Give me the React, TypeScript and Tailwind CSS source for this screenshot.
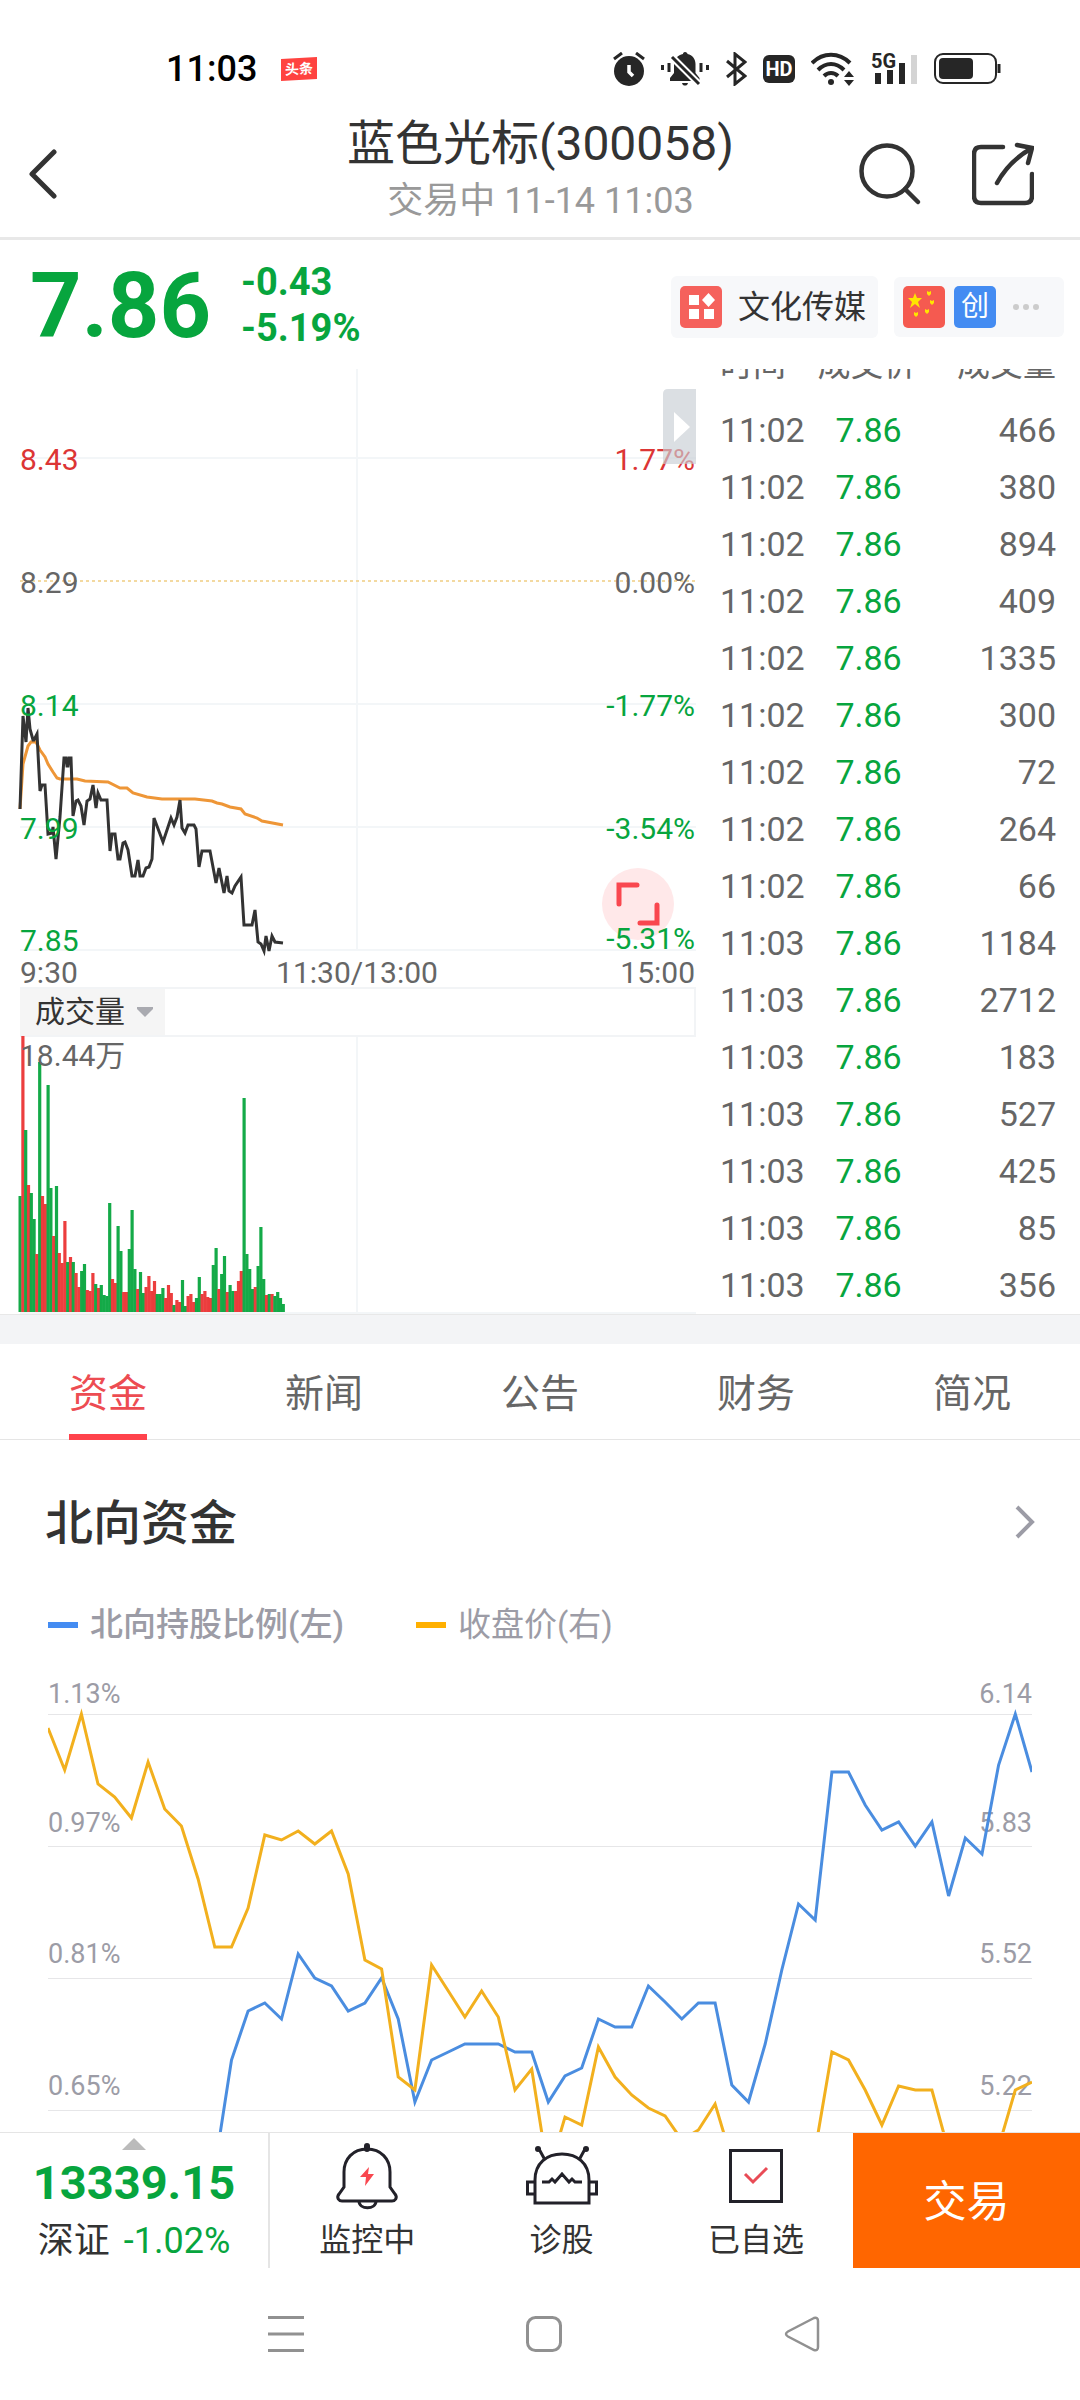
import type { ReactNode } from 'react'

type Trade = [time: string, price: string, volume: number]

const trades: Trade[] = [
  ['11:02', '7.86', 466],
  ['11:02', '7.86', 380],
  ['11:02', '7.86', 894],
  ['11:02', '7.86', 409],
  ['11:02', '7.86', 1335],
  ['11:02', '7.86', 300],
  ['11:02', '7.86', 72],
  ['11:02', '7.86', 264],
  ['11:02', '7.86', 66],
  ['11:03', '7.86', 1184],
  ['11:03', '7.86', 2712],
  ['11:03', '7.86', 183],
  ['11:03', '7.86', 527],
  ['11:03', '7.86', 425],
  ['11:03', '7.86', 85],
  ['11:03', '7.86', 356],
]

const tabs = ['资金', '新闻', '公告', '财务', '简况']

const priceLine =
  '0,440 3,347 6,373 8,339 10,360 13,371 14,371 17,365 20,422 22,416 25,416 28,465 32,464 33,458 36,490 40,448 44,389 46,389 47,397 48,397 49,389 51,389 53,447 56,432 58,431 61,437 64,456 67,432 70,430 73,416 76,439 78,424 81,431 87,431 90,482 92,465 95,465 98,490 100,490 103,474 105,473 108,481 112,507 115,507 118,491 120,507 123,507 126,499 129,498 132,490 134,449 143,473 151,449 154,456 157,448 160,431 162,459 165,464 168,456 174,456 176,460 179,498 182,482 190,482 196,514 199,499 204,524 207,507 209,522 212,524 215,517 221,508 224,556 232,556 235,541 238,573 241,575 244,582 246,567 249,582 252,567 255,573 263,574'

const averageLine =
  '0,440 3,395 8,377 11,373 16,373 20,381 25,388 28,395 33,403 37,409 40,410 57,410 65,412 88,413 100,419 107,419 113,424 127,428 142,430 175,430 192,432 197,434 202,435 210,438 221,440 225,445 237,449 242,452 263,456'

// one bar per minute, negative when the price fell
const volumes = [
  -116, 276, -182, 127, -119, -93, 58, -250, 116, 108, -227, -124, 76, -126, 59, 49, 91, -50, 55,
  -50, 39, 25, -41, -48, 22, 21, 39, -28, 24, -27, -17, -16, -109, 33, 29, -86, -61, 20, 20, -63,
  -102, -43, 23, -40, -19, 25, 36, 21, 31, -18, -18, -24, 14, 27, 19, -7, 12, 10, -32, -6, 16, 18,
  10, -14, -35, 18, 21, 15, 14, -47, -64, 23, -38, -56, 20, -27, -21, 21, 31, 41, -214, -58, -43,
  -23, 25, -46, -85, -33, 17, -18, 18, -16, -20, -14, -8,
]

const closePrices = [
  14, 56, 0, 70, 83, 104, 48, 95, 112, 165, 233, 233, 194, 121, 126, 117, 130, 117, 160, 246, 255,
  363, 376, 251, 277, 303, 277, 303, 376, 355, 460, 403, 411, 333, 363, 381, 394, 402, 426, 416,
  390, 446, 470, 470, 470, 470, 436, 338, 346, 376, 411, 372, 376, 376, 437, 470, 470, 433, 376,
  368,
]

const holdings = [
  454, 346, 297, 289, 305, 240, 264, 272, 297, 289, 264, 305, 388, 346, 338, 330, 330, 330, 338,
  338, 388, 362, 354, 305, 313, 313, 272, 288, 305, 289, 289, 371, 388, 330, 256, 190, 206, 58, 58,
  91, 116, 108, 132, 108, 182, 124, 140, 51, 0, 58,
]

const toPoints = (values: number[], start = 0) =>
  values.map((v, i) => `${(((i + start) * 984) / 59).toFixed(1)},${v + 34}`).join(' ')

function StatusBar() {
  return (
    <div className="flex h-[90px] items-end justify-between pr-[78px] pb-1 pl-[166px] text-[#262626]">
      <div className="flex items-center gap-6">
        <span className="text-4xl leading-[34px] font-medium text-black">11:03</span>
        <span className="-skew-y-3 bg-[#ff4340] px-1 text-sm leading-[22px] font-bold text-white">
          头条
        </span>
      </div>
      <div className="flex items-center gap-4">
        <svg width="32" height="34" viewBox="0 0 32 34" aria-label="闹钟">
          <circle cx="16" cy="19" r="15" fill="currentColor" />
          <path d="M1 7 9 1M31 7 23 1" stroke="currentColor" strokeWidth="3" />
          <path d="M16 13v7l4 4" fill="none" stroke="#fff" strokeWidth="3.500" />
        </svg>
        <svg width="48" height="34" viewBox="0 0 48 34" aria-label="静音">
          <path
            d="M24 0c1.500 0 2.500 1 2.500 2 5 1 8 5 8 10v9l4 5v3H9v-3l4-5v-9c0-5 4-9 9-10 0-1 .5-2 2-2zM21 31h6c-.5 2-1.500 2.500-3 2.500S21.500 33 21 31z"
            fill="currentColor"
          />
          <path d="M8 2 39 33" stroke="#fff" strokeWidth="7" />
          <path
            d="M11 5 38 32M1.500 13v5M8 11v9M46.500 13v5M40 11v9"
            stroke="currentColor"
            strokeWidth="3"
          />
        </svg>
        <svg width="22" height="34" viewBox="0 0 22 34" aria-label="蓝牙">
          <path
            d="M2 9 20 24 10 32V2l10 8L2 25"
            fill="none"
            stroke="currentColor"
            strokeWidth="3"
          />
        </svg>
        <span className="w-8 rounded-md bg-[#262626] text-center text-xl leading-7 font-bold text-white">
          HD
        </span>
        <svg width="44" height="34" viewBox="0 0 44 34" aria-label="无线网络">
          <g fill="none" stroke="currentColor" strokeWidth="4">
            <path d="M1 11c11-11 27-11 38 0" />
            <path d="M7 18c8-8 18-8 26 0" />
            <path d="M13 24c4-4 10-4 14 0" />
          </g>
          <circle cx="20" cy="30" r="3" fill="currentColor" />
          <path d="M33 25l5-6 5 6zM33 28l5 6 5-6z" fill="currentColor" />
        </svg>
        <svg width="47" height="34" viewBox="0 0 47 34" className="overflow-visible" aria-label="5G">
          <text x="0" y="16" fontSize="20" fontWeight="700" fill="currentColor">
            5G
          </text>
          <path d="M4 21h6v11H4zM16 18h6v14h-6zM28 11h6v21h-6z" fill="currentColor" />
          <path d="M40 3h6v29h-6z" fill="#d4d4d4" />
        </svg>
        <svg width="68" height="34" viewBox="0 0 68 34" aria-label="电量">
          <rect x="1" y="2" width="61" height="29" rx="8" fill="none" stroke="currentColor" strokeWidth="2" />
          <rect x="5" y="6" width="34" height="21" rx="4" fill="currentColor" />
          <path d="M65 12v9" stroke="currentColor" strokeWidth="3" />
        </svg>
      </div>
    </div>
  )
}

function Header() {
  return (
    <header className="flex h-[150px] items-start justify-between border-b-[3px] border-[#e8e8e8] pr-[46px] pl-[29px] text-[#333]">
      <button type="button" aria-label="返回" className="flex w-[174px] pt-[59px]">
        <svg width="30" height="50" viewBox="0 0 30 50">
          <path
            d="M25 3 3 25l22 22"
            fill="none"
            stroke="currentColor"
            strokeWidth="5"
            strokeLinecap="round"
            strokeLinejoin="round"
          />
        </svg>
      </button>
      <div className="pt-6 pl-5 text-center">
        <h1 className="text-5xl leading-[60px]">蓝色光标(300058)</h1>
        <p className="text-4xl leading-[54px] text-[#999]">交易中 11-14 11:03</p>
      </div>
      <div className="flex w-[176px] gap-[50px] pt-[52px]">
        <button type="button" aria-label="搜索">
          <svg width="64" height="64" viewBox="0 0 64 64">
            <g fill="none" stroke="currentColor" strokeWidth="4.500" strokeLinecap="round">
              <circle cx="29" cy="29" r="25.500" />
              <path d="M47 47 60 60" />
            </g>
          </svg>
        </button>
        <button type="button" aria-label="分享">
          <svg width="62" height="64" viewBox="0 0 62 64">
            <path
              d="M31 5H9Q2 5 2 12v42q0 7 7 7h44q7 0 7-7V32M45 3l15 3-4 15M60 6Q37 19 25 41"
              fill="none"
              stroke="currentColor"
              strokeWidth="4.500"
              strokeLinecap="round"
            />
          </svg>
        </button>
      </div>
    </header>
  )
}

function Quote() {
  return (
    <section className="flex h-[129px] items-center justify-between pr-4 pl-[30px] text-[#07a53e]">
      <div className="flex items-center gap-[30px] font-bold">
        <span className="pt-1 text-[90px] leading-[100px]">7.86</span>
        <div className="text-[38px] leading-[46px]">
          <p>-0.43</p>
          <p>-5.19%</p>
        </div>
      </div>
      <div className="flex items-center gap-4 pt-1">
        <a
          href="#sector"
          className="flex h-[62px] items-center gap-4 rounded-md bg-[#f7f8fa] pr-3 pl-[9px] text-[32px] text-[#333]"
        >
          <svg width="42" height="42" viewBox="0 0 42 42">
            <rect width="42" height="42" rx="5" fill="#f5615c" />
            <path d="M9 9h10v10H9zM9 23h10v10H9zM24 23h10v10H24zM28.500 7l6.500 7-6.500 7-6.500-7z" fill="#fff" />
          </svg>
          文化传媒
        </a>
        <button
          type="button"
          aria-label="更多标签"
          className="flex h-[60px] items-center gap-[9px] rounded-md bg-[#f7f8fa] px-[9px]"
        >
          <svg width="42" height="42" viewBox="0 0 42 42">
            <rect width="42" height="42" rx="5" fill="#f55a50" />
            <path
              d="M12 7l2 5h5l-4 4 2 6-5-4-5 4 2-6-4-4h5zM24 5l2 1 2-1v3l-2 2-2-2zM27 14l2 1 2-1v3l-2 2-2-2zM22 23l2 1 2-1v3l-2 2-2-2zM11 26l2 1 2-1v3l-2 2-2-2z"
              fill="#ffe500"
            />
          </svg>
          <span className="size-[42px] rounded-[5px] bg-[#448cf2] text-[28px] leading-[42px] text-white">
            创
          </span>
          <svg width="50" height="8" viewBox="0 0 50 8" fill="#ccc">
            <circle cx="11" cy="4" r="3" />
            <circle cx="21" cy="4" r="3" />
            <circle cx="31" cy="4" r="3" />
          </svg>
        </button>
      </div>
    </section>
  )
}

function MinuteChart() {
  return (
    <svg viewBox="0 0 676 618" className="block w-full overflow-visible text-[30px]">
      <path d="M0 89H676M0 335H676M0 458H676M0 581H676M337 0V581" stroke="#f3f6f8" strokeWidth="2" />
      <path d="M0 212H676" stroke="#f3d9a0" strokeWidth="2" strokeDasharray="3 3" />
      <circle cx="618" cy="535" r="36" fill="#ffe8e9" />
      <path
        d="M599 535V516h18M637 536v18h-17"
        fill="none"
        stroke="#f9474f"
        strokeWidth="5"
        strokeLinecap="round"
      />
      <polyline points={averageLine} fill="none" stroke="#ee9637" strokeWidth="3" />
      <polyline points={priceLine} fill="none" stroke="#333" strokeWidth="3" />
      <g fill="#07a53e">
        <text x="0" y="101" fill="#dc3535">8.43</text>
        <text x="0" y="224" fill="#666">8.29</text>
        <text x="0" y="347">8.14</text>
        <text x="0" y="470">7.99</text>
        <text x="0" y="582">7.85</text>
      </g>
      <g fill="#07a53e" textAnchor="end">
        <text x="675" y="101" fill="#dc3535">1.77%</text>
        <text x="675" y="224" fill="#666">0.00%</text>
        <text x="675" y="347">-1.77%</text>
        <text x="675" y="470">-3.54%</text>
        <text x="675" y="580">-5.31%</text>
      </g>
      <g fill="#666">
        <text x="0" y="614">9:30</text>
        <text x="337" y="614" textAnchor="middle">11:30/13:00</text>
        <text x="675" y="614" textAnchor="end">15:00</text>
      </g>
      <path d="M676 20h-28q-5 0-5 5v70h33z" fill="#c8ced4" fillOpacity="0.650" />
      <path d="M654 43l16 15-16 15z" fill="#fff" />
    </svg>
  )
}

function VolumeChart() {
  return (
    <svg viewBox="0 0 676 277" className="block w-full overflow-visible text-[30px]">
      <path d="M337 0V276M0 276H676" stroke="#f3f6f8" strokeWidth="2" />
      {volumes.map((v, i) => (
        <rect
          key={i}
          x={i * 2.8 - 1.5}
          y={275 - Math.abs(v)}
          width="3.200"
          height={Math.abs(v)}
          fill={v > 0 ? '#eb3434' : '#07a53e'}
          fillOpacity="0.950"
        />
      ))}
      <text x="0" y="29" fill="#666">18.44万</text>
    </svg>
  )
}

function TradeTable() {
  return (
    <div className="flex flex-col justify-end overflow-hidden pr-6 pl-6 contain-size">
      <table className="w-full table-fixed text-[34px] text-[#666]">
        <thead>
          <tr className="h-[75px] text-[33px]">
            <th className="w-[29%] p-0 text-left font-normal">时间</th>
            <th className="w-[33%] p-0 text-left font-normal">成交价</th>
            <th className="p-0 text-right font-normal">成交量</th>
          </tr>
        </thead>
        <tbody>
          {trades.map(([time, price, volume], i) => (
            <tr key={i} className="h-[57px] leading-[57px]">
              <td className="p-0">{time}</td>
              <td className="p-0 pl-[18px] text-[#07a53e]">{price}</td>
              <td className="p-0 text-right">{volume}</td>
            </tr>
          ))}
        </tbody>
      </table>
    </div>
  )
}

function NorthboundChart() {
  const rows = [
    { y: 34, labelY: 23, left: '1.13%', right: '6.14' },
    { y: 166, labelY: 152, left: '0.97%', right: '5.83' },
    { y: 298, labelY: 283, left: '0.81%', right: '5.52' },
    { y: 430, labelY: 415, left: '0.65%', right: '5.22' },
  ]
  return (
    <svg viewBox="0 0 984 452" className="block w-full overflow-hidden text-[27px]">
      {rows.map(({ y, labelY, left, right }) => (
        <g key={y} fill="#9c9ca6">
          <path d={`M0 ${y + 0.5}H984`} stroke="#e6e6e8" />
          <text x="0" y={labelY}>{left}</text>
          <text x="984" y={labelY} textAnchor="end">{right}</text>
        </g>
      ))}
      <polyline points={toPoints(holdings, 10)} fill="none" stroke="#4a8de0" strokeWidth="3" />
      <polyline points={toPoints(closePrices)} fill="none" stroke="#f2b01e" strokeWidth="3" />
    </svg>
  )
}

function Action({ label, children }: { label: string; children: ReactNode }) {
  return (
    <button type="button" className="flex flex-1 flex-col items-center pt-[10px] text-[32px] text-[#333]">
      {children}
      <span className="leading-[54px]">{label}</span>
    </button>
  )
}

function BottomBar() {
  return (
    <footer className="flex h-[136px] border-t border-[#e5e5e5]">
      <a
        href="#index"
        className="flex w-1/4 flex-col items-center border-r-2 border-[#e5e5e5] pt-[5px] text-[#07a53e]"
      >
        <svg width="24" height="12" viewBox="0 0 24 12">
          <path d="M12 0 24 12H0z" fill="#bbb" />
        </svg>
        <span className="text-[47px] leading-[66px] font-bold">13339.15</span>
        <span className="flex gap-[14px] text-4xl leading-[50px]">
          <span className="text-[#333]">深证</span>-1.02%
        </span>
      </a>
      <Action label="监控中">
        <svg width="72" height="70" viewBox="0 0 72 70">
          <g fill="none" stroke="#222129" strokeWidth="3">
            <path d="M36 6c-14 0-23 10-23 23v15l-5 7c-3 4 0 7 3 7h50c3 0 6-3 3-7l-5-7V29C59 16 50 6 36 6z" />
            <path d="M28 58c0 9 17 9 17 0" />
            <path d="M36 3v3" strokeWidth="6" strokeLinecap="round" />
          </g>
          <path d="M38 24 29 34h6l-1 9 9-12h-6z" fill="#f9474f" />
        </svg>
      </Action>
      <Action label="诊股">
        <svg width="72" height="70" viewBox="0 0 72 70">
          <g fill="none" stroke="#222129" strokeWidth="3">
            <path d="M9 60V37c0-17 12-26 27-26s27 9 27 26v23z" />
            <path d="M9 39H1.500v12H9M63 39h7.500v12H63M19 17 13 6M53 17l6-11" />
            <path d="M16 39h7l3-3 3 3 7-8 7 8 3-3 3 3h7" />
          </g>
          <circle cx="12" cy="6" r="3" fill="#222129" />
          <circle cx="60" cy="6" r="3" fill="#222129" />
        </svg>
      </Action>
      <Action label="已自选">
        <svg width="72" height="70" viewBox="0 0 72 70">
          <rect x="10.500" y="7.500" width="51" height="51" fill="none" stroke="#222129" strokeWidth="3" />
          <path d="M25 31l8 8 14-14" fill="none" stroke="#e94b56" strokeWidth="3" />
        </svg>
      </Action>
      <button type="button" className="w-[21%] bg-[#ff6600] pt-1 text-[43px] text-white">
        交易
      </button>
    </footer>
  )
}

function SystemNav() {
  return (
    <nav className="flex h-[132px] items-center justify-center gap-[222px] pl-2 text-[#919191]">
      <button type="button" aria-label="最近任务">
        <svg width="36" height="36" viewBox="0 0 36 36">
          <path d="M0 1.500h36M0 18h36M0 34.500h36" stroke="currentColor" strokeWidth="3" />
        </svg>
      </button>
      <button type="button" aria-label="主屏幕">
        <svg width="36" height="36" viewBox="0 0 36 36">
          <rect x="1.500" y="1.500" width="33" height="33" rx="8" fill="none" stroke="currentColor" strokeWidth="3" />
        </svg>
      </button>
      <button type="button" aria-label="返回上一页">
        <svg width="36" height="36" viewBox="0 0 36 36">
          <path
            d="M30 2 4 15.500q-4 2.500 0 5L30 34q4 1 4-3V5q0-4-4-3z"
            fill="none"
            stroke="currentColor"
            strokeWidth="2.500"
          />
        </svg>
      </button>
    </nav>
  )
}

export default function App() {
  return (
    <div className="min-h-screen bg-white font-[Roboto,'Noto_Sans_CJK_SC',sans-serif]">
      <StatusBar />
      <Header />
      <Quote />

      <section className="grid grid-cols-[696fr_384fr]">
        <div className="pl-5">
          <MinuteChart />
          <div className="border-2 border-l-0 border-[#f2f4f6]">
            <button
              type="button"
              className="flex items-center gap-3 bg-[#f5f5f5] pr-3 pl-[15px] text-3xl leading-[46px] text-[#333]"
            >
              成交量
              <svg width="16" height="10" viewBox="0 0 16 10">
                <path d="M0 0h16v2L8 10 0 2z" fill="#a9aab0" />
              </svg>
            </button>
          </div>
          <VolumeChart />
        </div>
        <TradeTable />
      </section>

      <div className="h-[30px] border-t border-[#e8e8e8] bg-[#f3f4f6]" />

      <nav className="flex h-24 border-b border-[#e5e5e5]">
        {tabs.map((tab, i) => (
          <div key={tab} className="flex flex-1 justify-center">
            <a
              href={`#tab-${i}`}
              className={
                i === 0
                  ? 'h-24 border-b-[6px] border-[#ff434c] text-[39px] leading-[100px] text-[#ed4c52]'
                  : 'h-24 text-[39px] leading-[100px] text-[#666]'
              }
            >
              {tab}
            </a>
          </div>
        ))}
      </nav>

      <section>
        <a href="#northbound" className="flex h-[164px] items-center justify-between px-[45px]">
          <h2 className="pt-1 text-5xl font-medium text-[#333]">北向资金</h2>
          <svg width="20" height="34" viewBox="0 0 20 34">
            <path d="M2 2l15 15L2 32" fill="none" stroke="#9c9ca6" strokeWidth="4" />
          </svg>
        </a>
        <div className="flex h-[76px] items-start gap-[72px] px-12 text-[33px] leading-[42px] text-[#9c9ca6]">
          <span className="flex items-center gap-3 font-medium">
            <i className="h-[6px] w-[30px] bg-[#448cf2]" />
            北向持股比例(左)
          </span>
          <span className="flex items-center gap-3">
            <i className="h-[6px] w-[30px] bg-[#ffb000]" />
            收盘价(右)
          </span>
        </div>
        <div className="px-12">
          <NorthboundChart />
        </div>
      </section>

      <BottomBar />
      <SystemNav />
    </div>
  )
}
